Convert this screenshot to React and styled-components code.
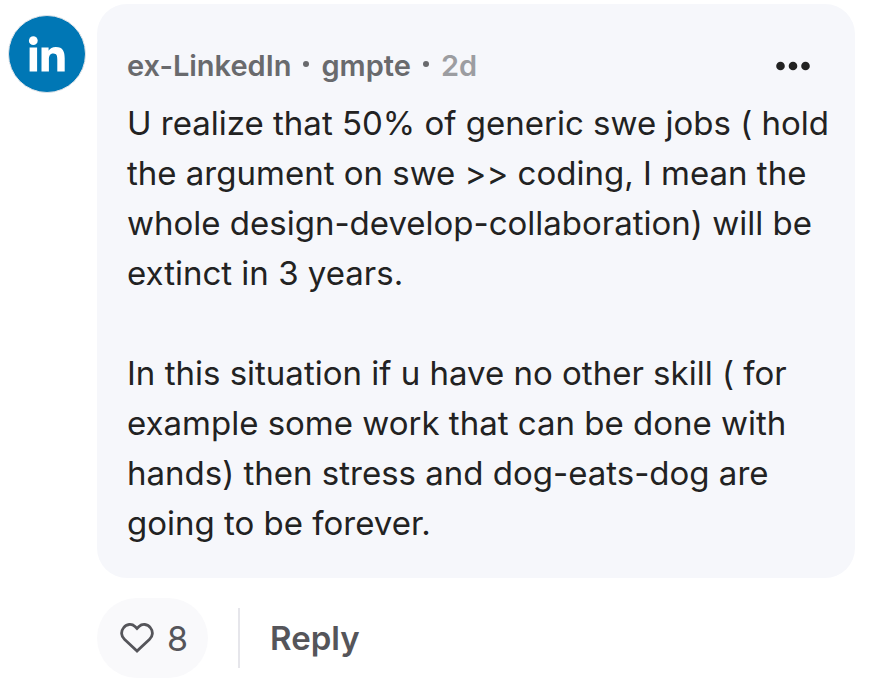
import React from "react";
import styled, { createGlobalStyle } from "styled-components";

const GlobalStyle = createGlobalStyle`
  * { box-sizing: border-box; }
  body { margin: 0; background: #ffffff; font-family: Inter, "Liberation Sans", sans-serif; color: #222222; }
  button { font: inherit; border: 0; cursor: pointer; }
`;

const Comment = styled.article`
  display: grid;
  grid-template-columns: 78px minmax(0, 1fr);
  column-gap: 11px;
  padding: 4px 17px 16px 8px;
`;

const Avatar = styled.svg`
  width: 78px;
  height: 78px;
  margin-top: 11px;
`;

const Bubble = styled.section`
  padding: 37px 20px 30px 30px;
  border-radius: 30px;
  background: #f6f7fb;
`;

const Header = styled.header`
  display: flex;
  align-items: center;
  justify-content: space-between;
  height: 50px;
  margin-bottom: 7px;
`;

const Meta = styled.div`
  display: flex;
  align-items: center;
  gap: 12px;
  font-size: 29px;
  font-weight: 600;
  line-height: 50px;
`;

const AuthorLink = styled.a`
  color: #696a6d;
  text-decoration: none;
`;

const Dot = styled.span`
  width: 6px;
  height: 6px;
  margin-bottom: 4px;
  border-radius: 50%;
  background: #696a6d;
`;

const Time = styled.time`
  color: #9c9da1;
`;

const MoreButton = styled.button`
  display: flex;
  align-items: center;
  padding: 10px 25px;
  background: transparent;
`;

const Body = styled.p`
  margin: 0 0 50px;
  font-size: 33px;
  line-height: 50px;

  &:last-child { margin-bottom: 0; }
`;

const Actions = styled.footer`
  grid-column: 2;
  display: flex;
  align-items: center;
  margin-top: 20px;
`;

const LikeButton = styled.button`
  display: flex;
  align-items: center;
  gap: 13px;
  height: 80px;
  padding: 0 20px 0 23px;
  border-radius: 40px;
  background: #f9f9fb;
  color: #55555a;
  font-size: 34px;
`;

const Divider = styled.span`
  width: 2px;
  height: 60px;
  margin: 0 30px;
  background: #e6e6eb;
`;

const ReplyButton = styled.button`
  padding: 0;
  background: transparent;
  color: #55555a;
  font-size: 33px;
  font-weight: 600;
`;

export default function App() {
  return (
    <>
      <GlobalStyle />
      <Comment>
        <Avatar viewBox="0 0 78 78" role="img" aria-label="LinkedIn">
          <circle cx="39" cy="39" r="38.500" fill="#0077b5" stroke="#dfe3e8" />
          <g fill="#fff">
            <circle cx="25.300" cy="25.700" r="4.400" />
            <path d="M21.600 32.500h7.500v24h-7.500zM33.500 32.500h7.100v3.300c1.300-2.300 3.900-3.900 7.200-3.900 7.300 0 8.900 4.800 8.900 11.400v13.200h-7.400V44.800c0-3.400-.3-6.300-3.900-6.300-3.600 0-4.500 2.700-4.500 6.300v11.700h-7.400z" />
          </g>
        </Avatar>
        <Bubble>
          <Header>
            <Meta>
              <AuthorLink href="#company">ex-LinkedIn</AuthorLink>
              <Dot />
              <AuthorLink href="#author">gmpte</AuthorLink>
              <Dot />
              <Time>2d</Time>
            </Meta>
            <MoreButton type="button" aria-label="More options">
              <svg width="34" height="10" viewBox="0 0 34 10" fill="#222222">
                <circle cx="4.500" cy="5" r="4.300" />
                <circle cx="17" cy="5" r="4.300" />
                <circle cx="29.500" cy="5" r="4.300" />
              </svg>
            </MoreButton>
          </Header>
          <Body>
            U realize that 50% of generic swe jobs ( hold the argument on swe &gt;&gt; coding, I mean the whole design-develop-collaboration) will be extinct in 3 years.
          </Body>
          <Body>
            In this situation if u have no other skill ( for example some work that can be done with hands) then stress and dog-eats-dog are going to be forever.
          </Body>
        </Bubble>
        <Actions>
          <LikeButton type="button" aria-label="Like, 8 likes">
            <svg width="34" height="32" viewBox="0 0 34 32" fill="none" stroke="#55555a" strokeWidth="2.800" strokeLinejoin="miter">
              <path d="M17 29 4.400 17.200a8.200 8.200 0 0 1-1-11.200C6.500 1.700 11.800 1.500 15 4.500l2 2 2-2c3.200-3 8.500-2.800 11.600 1.500a8.200 8.200 0 0 1-1 11.200z" />
            </svg>
            8
          </LikeButton>
          <Divider />
          <ReplyButton type="button">Reply</ReplyButton>
        </Actions>
      </Comment>
    </>
  );
}
